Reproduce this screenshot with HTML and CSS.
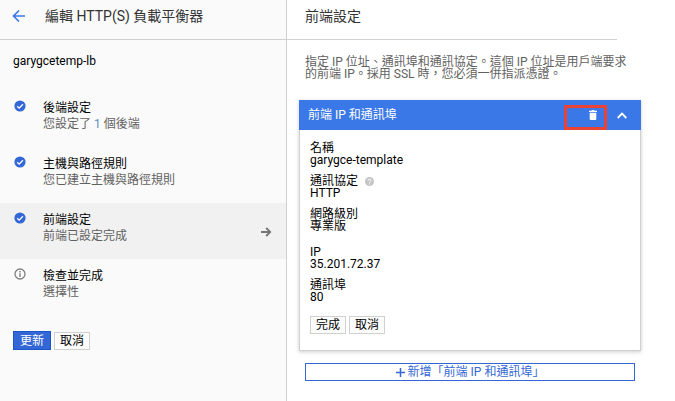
FILE: index.html
```html
<!DOCTYPE html>
<html lang="zh-Hant">
<head>
    <meta charset="UTF-8">
    <meta name="viewport" content="width=device-width, initial-scale=1.0">
    <title>編輯 HTTP(S) 負載平衡器</title>
    <link rel="stylesheet" href="styles.css">
</head>
<body>
    <div class="page">
        <aside class="sidebar">
            <header class="topbar">
                <a href="#" class="back" aria-label="返回">
                    <svg width="14" height="14" viewBox="0 0 14 14"><path d="M13 7H2M7 1.5L1.5 7L7 12.5" fill="none" stroke="#3b78e7" stroke-width="1.7"/></svg>
                </a>
                <h1>編輯 HTTP(S) 負載平衡器</h1>
            </header>
            <p class="lb-name">garygcetemp-lb</p>
            <nav class="steps">
                <a href="#" class="step">
                    <svg class="icon" width="12" height="12" viewBox="0 0 12 12"><circle cx="6" cy="6" r="5.6" fill="#3367d6"/><path d="M3.2 6.2L5.2 8.1L8.9 4.2" fill="none" stroke="#fff" stroke-width="1.3"/></svg>
                    <span class="text"><b>後端設定</b><span>您設定了 <i>1</i> 個後端</span></span>
                </a>
                <a href="#" class="step">
                    <svg class="icon" width="12" height="12" viewBox="0 0 12 12"><circle cx="6" cy="6" r="5.6" fill="#3367d6"/><path d="M3.2 6.2L5.2 8.1L8.9 4.2" fill="none" stroke="#fff" stroke-width="1.3"/></svg>
                    <span class="text"><b>主機與路徑規則</b><span>您已建立主機與路徑規則</span></span>
                </a>
                <a href="#" class="step active">
                    <svg class="icon" width="12" height="12" viewBox="0 0 12 12"><circle cx="6" cy="6" r="5.6" fill="#3367d6"/><path d="M3.2 6.2L5.2 8.1L8.9 4.2" fill="none" stroke="#fff" stroke-width="1.3"/></svg>
                    <span class="text"><b>前端設定</b><span>前端已設定完成</span></span>
                    <svg class="arrow" width="12" height="10" viewBox="0 0 12 10"><path d="M1 5H10M6.2 1L10.2 5L6.2 9" fill="none" stroke="#757575" stroke-width="1.8"/></svg>
                </a>
                <a href="#" class="step">
                    <svg class="icon" width="12" height="12" viewBox="0 0 12 12"><circle cx="6" cy="6" r="5" fill="none" stroke="#808080" stroke-width="1.3"/><path d="M6 5.3V9M6 3V4.4" stroke="#808080" stroke-width="1.4"/></svg>
                    <span class="text"><b>檢查並完成</b><span>選擇性</span></span>
                </a>
            </nav>
            <div class="buttons main-buttons">
                <button type="button" class="btn primary">更新</button>
                <button type="button" class="btn">取消</button>
            </div>
        </aside>

        <main class="content">
            <header class="topbar">
                <h2>前端設定</h2>
            </header>
            <p class="intro">指定 IP 位址、通訊埠和通訊協定。這個 IP 位址是用戶端要求的前端 IP。採用 SSL 時，您必須一併指派憑證。</p>

            <section class="card">
                <div class="card-head">
                    <h3>前端 IP 和通訊埠</h3>
                    <button type="button" class="icon-btn" aria-label="刪除">
                        <svg width="8" height="10" viewBox="0 0 8 10"><path d="M0 .8H2.4L3 0H5L5.6 .8H8V2H0ZM.7 2.8H7.3V9Q7.3 10 6.3 10H1.7Q.7 10 .7 9Z" fill="#fff"/></svg>
                        <span class="highlight"></span>
                    </button>
                    <button type="button" class="icon-btn" aria-label="收合">
                        <svg width="10" height="7" viewBox="0 0 10 7"><path d="M.7 6L5 1.6L9.3 6" fill="none" stroke="#fff" stroke-width="1.8"/></svg>
                    </button>
                </div>
                <div class="card-body">
                    <dl>
                        <div><dt>名稱</dt><dd>garygce-template</dd></div>
                        <div>
                            <dt>通訊協定
                                <svg class="help" width="9" height="9" viewBox="0 0 9 9"><circle cx="4.5" cy="4.5" r="4.5" fill="#c4c4c4"/><path d="M3 3.6Q3 2.2 4.5 2.2T6 3.5Q6 4.2 4.5 4.9V5.6M4.5 6.3V7.4" fill="none" stroke="#fff" stroke-width="1"/></svg>
                            </dt>
                            <dd>HTTP</dd>
                        </div>
                        <div class="tier"><dt>網路級別</dt><dd>專業版</dd></div>
                        <div><dt>IP</dt><dd>35.201.72.37</dd></div>
                        <div><dt>通訊埠</dt><dd>80</dd></div>
                    </dl>
                    <div class="buttons">
                        <button type="button" class="btn">完成</button>
                        <button type="button" class="btn">取消</button>
                    </div>
                </div>
            </section>

            <button type="button" class="add">
                <svg width="9" height="9" viewBox="0 0 9 9"><path d="M4.5 0V9M0 4.5H9" stroke="#3367d6" stroke-width="1.5"/></svg>
                新增「前端 IP 和通訊埠」
            </button>
        </main>
    </div>
</body>
</html>
```
FILE: styles.css
```css
*{
    box-sizing: border-box;
}
body{
    margin: 0;
    background-color: #fff;
    color: #000;
    font: 12px/16px Roboto, "Noto Sans CJK TC", sans-serif;
}
h1, h2, h3, p, dl, dd{
    margin: 0;
}
a{
    color: inherit;
    text-decoration: none;
}
svg{
    display: block;
    flex: none;
}
button{
    font: inherit;
    cursor: pointer;
}
.page{
    display: grid;
    grid-template-columns: 287px 1fr;
    min-height: 100vh;
}
.sidebar{
    background-color: #fafafa;
    border-right: 1px solid #d0d0d0;
}
.topbar{
    display: flex;
    align-items: center;
    height: 40px;
    padding-bottom: 8px;
    border-bottom: 1px solid #d0d0d0;
}
.topbar h1, .topbar h2{
    font-size: 14px;
    font-weight: 400;
    color: #333;
}
.back{
    margin: 0 19px 0 12px;
}
.lb-name{
    padding: 13px 13px 22px;
}
.step{
    display: flex;
    gap: 17px;
    height: 56px;
    padding: 9px 14px 0 14px;
}
.step.active{
    background-color: #f1f1f1;
}
.text{
    flex: 1;
    color: #616161;
}
.text b, .text span{
    display: block;
    font-weight: 400;
}
.text b{
    color: #000;
}
.text i{
    font-style: normal;
    color: #5a8fc0;
}
.arrow{
    margin-top: 15px;
}
.buttons{
    display: flex;
    align-items: flex-end;
    gap: 3px;
}
.main-buttons{
    padding: 16px 13px;
}
.btn{
    height: 18px;
    padding: 0 5px;
    border: 1px solid #d0d0d0;
    background-color: #fdfdfd;
    color: #000;
    line-height: 14px;
}
.btn.primary{
    height: 19px;
    padding: 0 6px;
    border-color: #1a56c9;
    background-color: #3367d6;
    color: #fff;
}
.content .topbar{
    margin-right: 58px;
    padding-left: 18px;
}
.intro{
    padding: 16px 40px 20px 18px;
    line-height: 12px;
    color: #616161;
}
.card{
    margin: 0 34px 12px 12px;
    border: 1px solid #d0d0d0;
    border-top: 0;
    box-shadow: 0 1px 4px rgba(0, 0, 0, 0.2);
}
.card-head{
    display: flex;
    align-items: center;
    gap: 20px;
    height: 30px;
    margin: 0 -1px;
    padding: 0 14px 0 9px;
    background-color: #3b78e7;
    color: #fff;
}
.card-head h3{
    flex: 1;
    font-size: 12px;
    font-weight: 400;
}
.icon-btn{
    position: relative;
    padding: 0;
    border: 0;
    background: none;
}
/* red frame round the delete button */
.highlight{
    position: absolute;
    top: -5px;
    left: -25px;
    width: 43px;
    height: 25px;
    border: 3px solid #ea4335;
}
.card-body{
    padding: 12px 10px 16px;
    line-height: 12px;
}
dl{
    display: grid;
    gap: 9px;
}
dt{
    display: flex;
    align-items: center;
    gap: 7px;
}
.tier{
    padding-bottom: 5px;
}
.card-body .buttons{
    margin-top: 13px;
}
.add{
    display: flex;
    align-items: center;
    justify-content: center;
    gap: 3px;
    width: calc(100% - 58px);
    height: 18px;
    margin-left: 18px;
    padding: 0;
    border: 1px solid #3367d6;
    background-color: #fff;
    color: #3367d6;
    line-height: 14px;
}
```
